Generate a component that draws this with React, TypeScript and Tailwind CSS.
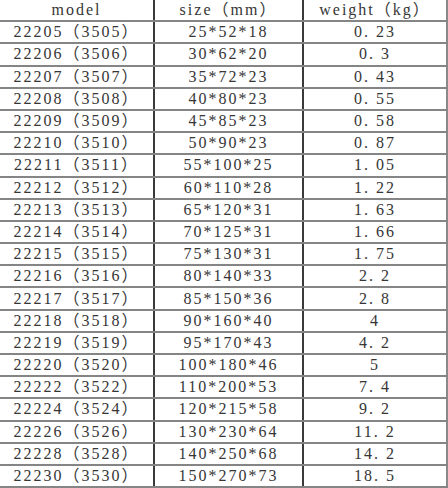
import React from 'react';

const rows: [string, string, string][] = [
  ['22205（3505）', '25*52*18', '0. 23'],
  ['22206（3506）', '30*62*20', '0. 3'],
  ['22207（3507）', '35*72*23', '0. 43'],
  ['22208（3508）', '40*80*23', '0. 55'],
  ['22209（3509）', '45*85*23', '0. 58'],
  ['22210（3510）', '50*90*23', '0. 87'],
  ['22211（3511）', '55*100*25', '1. 05'],
  ['22212（3512）', '60*110*28', '1. 22'],
  ['22213（3513）', '65*120*31', '1. 63'],
  ['22214（3514）', '70*125*31', '1. 66'],
  ['22215（3515）', '75*130*31', '1. 75'],
  ['22216（3516）', '80*140*33', '2. 2'],
  ['22217（3517）', '85*150*36', '2. 8'],
  ['22218（3518）', '90*160*40', '4'],
  ['22219（3519）', '95*170*43', '4. 2'],
  ['22220（3520）', '100*180*46', '5'],
  ['22222（3522）', '110*200*53', '7. 4'],
  ['22224（3524）', '120*215*58', '9. 2'],
  ['22226（3526）', '130*230*64', '11. 2'],
  ['22228（3528）', '140*250*68', '14. 2'],
  ['22230（3530）', '150*270*73', '18. 5'],
];

function Row({ cells }: { cells: [string, string, string] }) {
  return (
    <div className="flex-1 grid grid-cols-[155px_149px_1fr] border-b-2 border-[#858585]">
      <div className="flex items-center justify-center border-r-2 border-[#3a3a3a]">{cells[0]}</div>
      <div className="flex items-center justify-center border-r-2 border-[#3a3a3a]">{cells[1]}</div>
      <div className="flex items-center justify-center border-r-2 border-[#8a8a8a] whitespace-pre">{cells[2]}</div>
    </div>
  );
}

export default function App() {
  return (
    <div
      className="w-[448px] h-[488px] flex flex-col bg-white text-[#363636] text-[16px] leading-none tracking-[2px]"
      style={{ fontFamily: '"Liberation Serif", "Noto Sans CJK SC", serif' }}
    >
      <Row cells={['model', 'size（mm）', 'weight（kg）']} />
      {rows.map((r) => (
        <Row key={r[0]} cells={r} />
      ))}
    </div>
  );
}
